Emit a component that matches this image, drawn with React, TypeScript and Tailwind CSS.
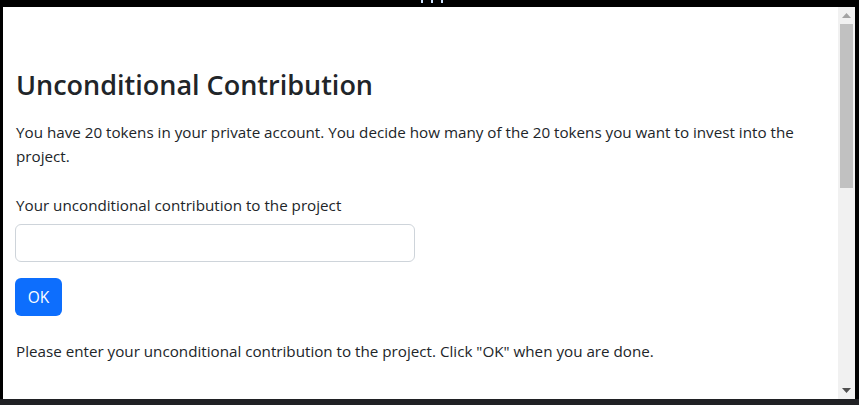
const font = { fontFamily: '"Open Sans", "Noto Sans", sans-serif' };

const App = () => {
  return (
    <div className="w-[859px] h-[405px] flex flex-col bg-black overflow-hidden" style={font}>
      {/* top bar with the little dots */}
      <div className="h-[7px] flex justify-center gap-2 pl-[4px]">
        <span className="w-[2px] h-[3px] bg-[#cfe3ff]" />
        <span className="w-[2px] h-[3px] bg-[#cfe3ff]" />
        <span className="w-[2px] h-[3px] bg-[#cfe3ff]" />
      </div>

      <div className="flex-1 flex min-h-0">
        <div className="w-[3px] bg-black" />

        <div className="flex-1 bg-white text-[#212529] px-[12px] pt-[62px] text-[15.2px] leading-6">
          <h2 className="text-[27px] font-semibold leading-[1.2] mb-[19px] pl-px">Unconditional Contribution</h2>
          <p className="mb-[25px] pl-px">
            You have 20 tokens in your private account. You decide how many of the 20 tokens you want to invest into the project.
          </p>
          <label className="block mb-[7px] pl-px">Your unconditional contribution to the project</label>
          <input
            type="text"
            className="block w-[400px] h-[38px] border border-[#ced4da] rounded-[6px] px-3 mb-4 outline-none"
          />
          <button className="h-[38px] w-[47px] bg-[#0d6efd] text-white rounded-[6px] text-[15.5px]">OK</button>
          <p className="mt-[23px] pl-px">
            Please enter your unconditional contribution to the project. Click "OK" when you are done.
          </p>
        </div>

        {/* scrollbar */}
        <div className="w-[17px] bg-[#f1f1f1] flex flex-col items-center">
          <div className="h-[17px] flex items-center justify-center">
            <svg width="9" height="5" viewBox="0 0 9 5">
              <path d="M4.5 0 L9 5 L0 5 Z" fill="#a3a3a3" />
            </svg>
          </div>
          <div className="w-[13px] h-[164px] bg-[#c1c1c1]" />
          <div className="flex-1" />
          <div className="h-[17px] flex items-center justify-center">
            <svg width="9" height="5" viewBox="0 0 9 5">
              <path d="M0 0 L9 0 L4.5 5 Z" fill="#505050" />
            </svg>
          </div>
        </div>

        <div className="w-[4px] bg-black" />
      </div>

      <div className="h-[6px] bg-[#202124]" />
    </div>
  );
};

export default App;
